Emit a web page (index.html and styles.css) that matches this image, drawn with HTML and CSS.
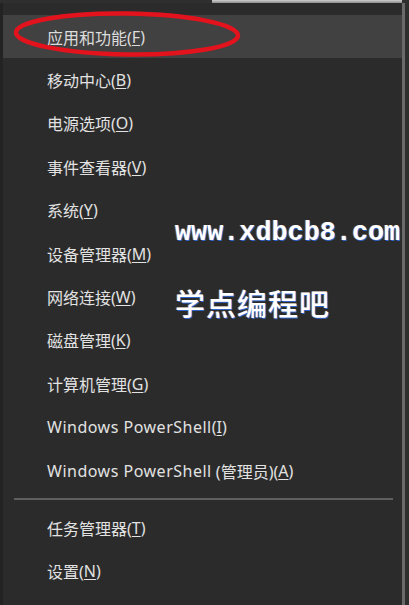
FILE: index.html
```html
<!DOCTYPE html>
<html lang="zh-CN">
<head>
<meta charset="utf-8">
<title>Win+X 菜单</title>
<link rel="stylesheet" href="styles.css">
</head>
<body>
<div class="screen">
  <div class="topstrip"><span class="strip-light"></span></div>
  <div class="stage">
    <div class="leftedge"></div>
    <nav class="menu">
      <ul class="items">
        <li class="item active">应用和功能(<u>F</u>)</li>
        <li class="item">移动中心(<u>B</u>)</li>
        <li class="item">电源选项(<u>O</u>)</li>
        <li class="item">事件查看器(<u>V</u>)</li>
        <li class="item">系统(<u>Y</u>)</li>
        <li class="item">设备管理器(<u>M</u>)</li>
        <li class="item">网络连接(<u>W</u>)</li>
        <li class="item">磁盘管理(<u>K</u>)</li>
        <li class="item">计算机管理(<u>G</u>)</li>
        <li class="item"><span class="latin">Windows PowerShell</span>(<u>I</u>)</li>
        <li class="item"><span class="latin">Windows PowerShell</span>&nbsp;(管理员)(<u>A</u>)</li>
        <li class="sep"><hr></li>
        <li class="item">任务管理器(<u>T</u>)</li>
        <li class="item">设置(<u>N</u>)</li>
      </ul>
    </nav>
    <div class="rightedge"></div>
  </div>

  <svg class="circle" width="245" height="62" viewBox="0 0 245 62" aria-hidden="true">
    <ellipse cx="127" cy="34" rx="111" ry="20.5" fill="none" stroke="#e3131d" stroke-width="4.5" transform="rotate(0.8 127 34)"/>
  </svg>
  <div class="wm wm-url">www.xdbcb8.com</div>
  <div class="wm wm-cn">学点编程吧</div>
</div>
</body>
</html>
```
FILE: styles.css
```css
html, body {
  margin: 0;
  padding: 0;
  background: #262626;
}
.screen {
  position: relative;
  width: 409px;
  height: 605px;
  overflow: hidden;
  background: #262626;
}
.topstrip {
  height: 3px;
  background: #2f2f2f;
  display: flex;
}
.strip-light {
  margin-left: 212px;
  width: 190px;
  height: 3px;
  background: linear-gradient(#cfcfcf, #8a8a8a);
}
.stage {
  display: flex;
  height: 602px;
}
.leftedge {
  width: 3px;
  background: #232323;
}
.menu {
  width: 399px;
  background: #2b2b2b;
  padding-top: 12px;
  box-sizing: border-box;
}
.rightedge {
  width: 3px;
  background: #6a6a6a;
  border-right: 4px solid #2e2e2e;
}
.items {
  list-style: none;
  margin: 0;
  padding: 0;
}
.item {
  height: 43.4px;
  display: flex;
  align-items: center;
  padding-left: 44px;
  font-family: "Noto Sans", "Noto Sans CJK SC", sans-serif;
  font-size: 16px;
  color: #e2e2e2;
  white-space: nowrap;
}
.latin {
  letter-spacing: 0.5px;
}
.item u {
  text-decoration-thickness: 1px;
  text-underline-offset: 2px;
}
.item.active {
  background: #414141;
  color: #dcdcdc;
}
.sep {
  height: 13.6px;
  display: flex;
  align-items: center;
  padding: 0 9px 0 11px;
}
.sep hr {
  flex: 1;
  margin: 0;
  border: 0;
  height: 2px;
  background: #5f5f5f;
}
.circle {
  position: absolute;
  left: 0;
  top: 0;
}
.wm {
  position: absolute;
  left: 175px;
  color: #ffffff;
  white-space: nowrap;
  text-shadow: 1px 1px 0 #2f63c8, -1px 0 0 #7a5a3a;
}
.wm-url {
  top: 218px;
  font-family: "Liberation Mono", monospace;
  font-weight: bold;
  font-size: 26.8px;
  line-height: 30px;
}
.wm-cn {
  top: 282px;
  font-family: "Noto Sans CJK SC", sans-serif;
  font-weight: 500;
  font-size: 30px;
  line-height: 40px;
  letter-spacing: 1px;
}
```
